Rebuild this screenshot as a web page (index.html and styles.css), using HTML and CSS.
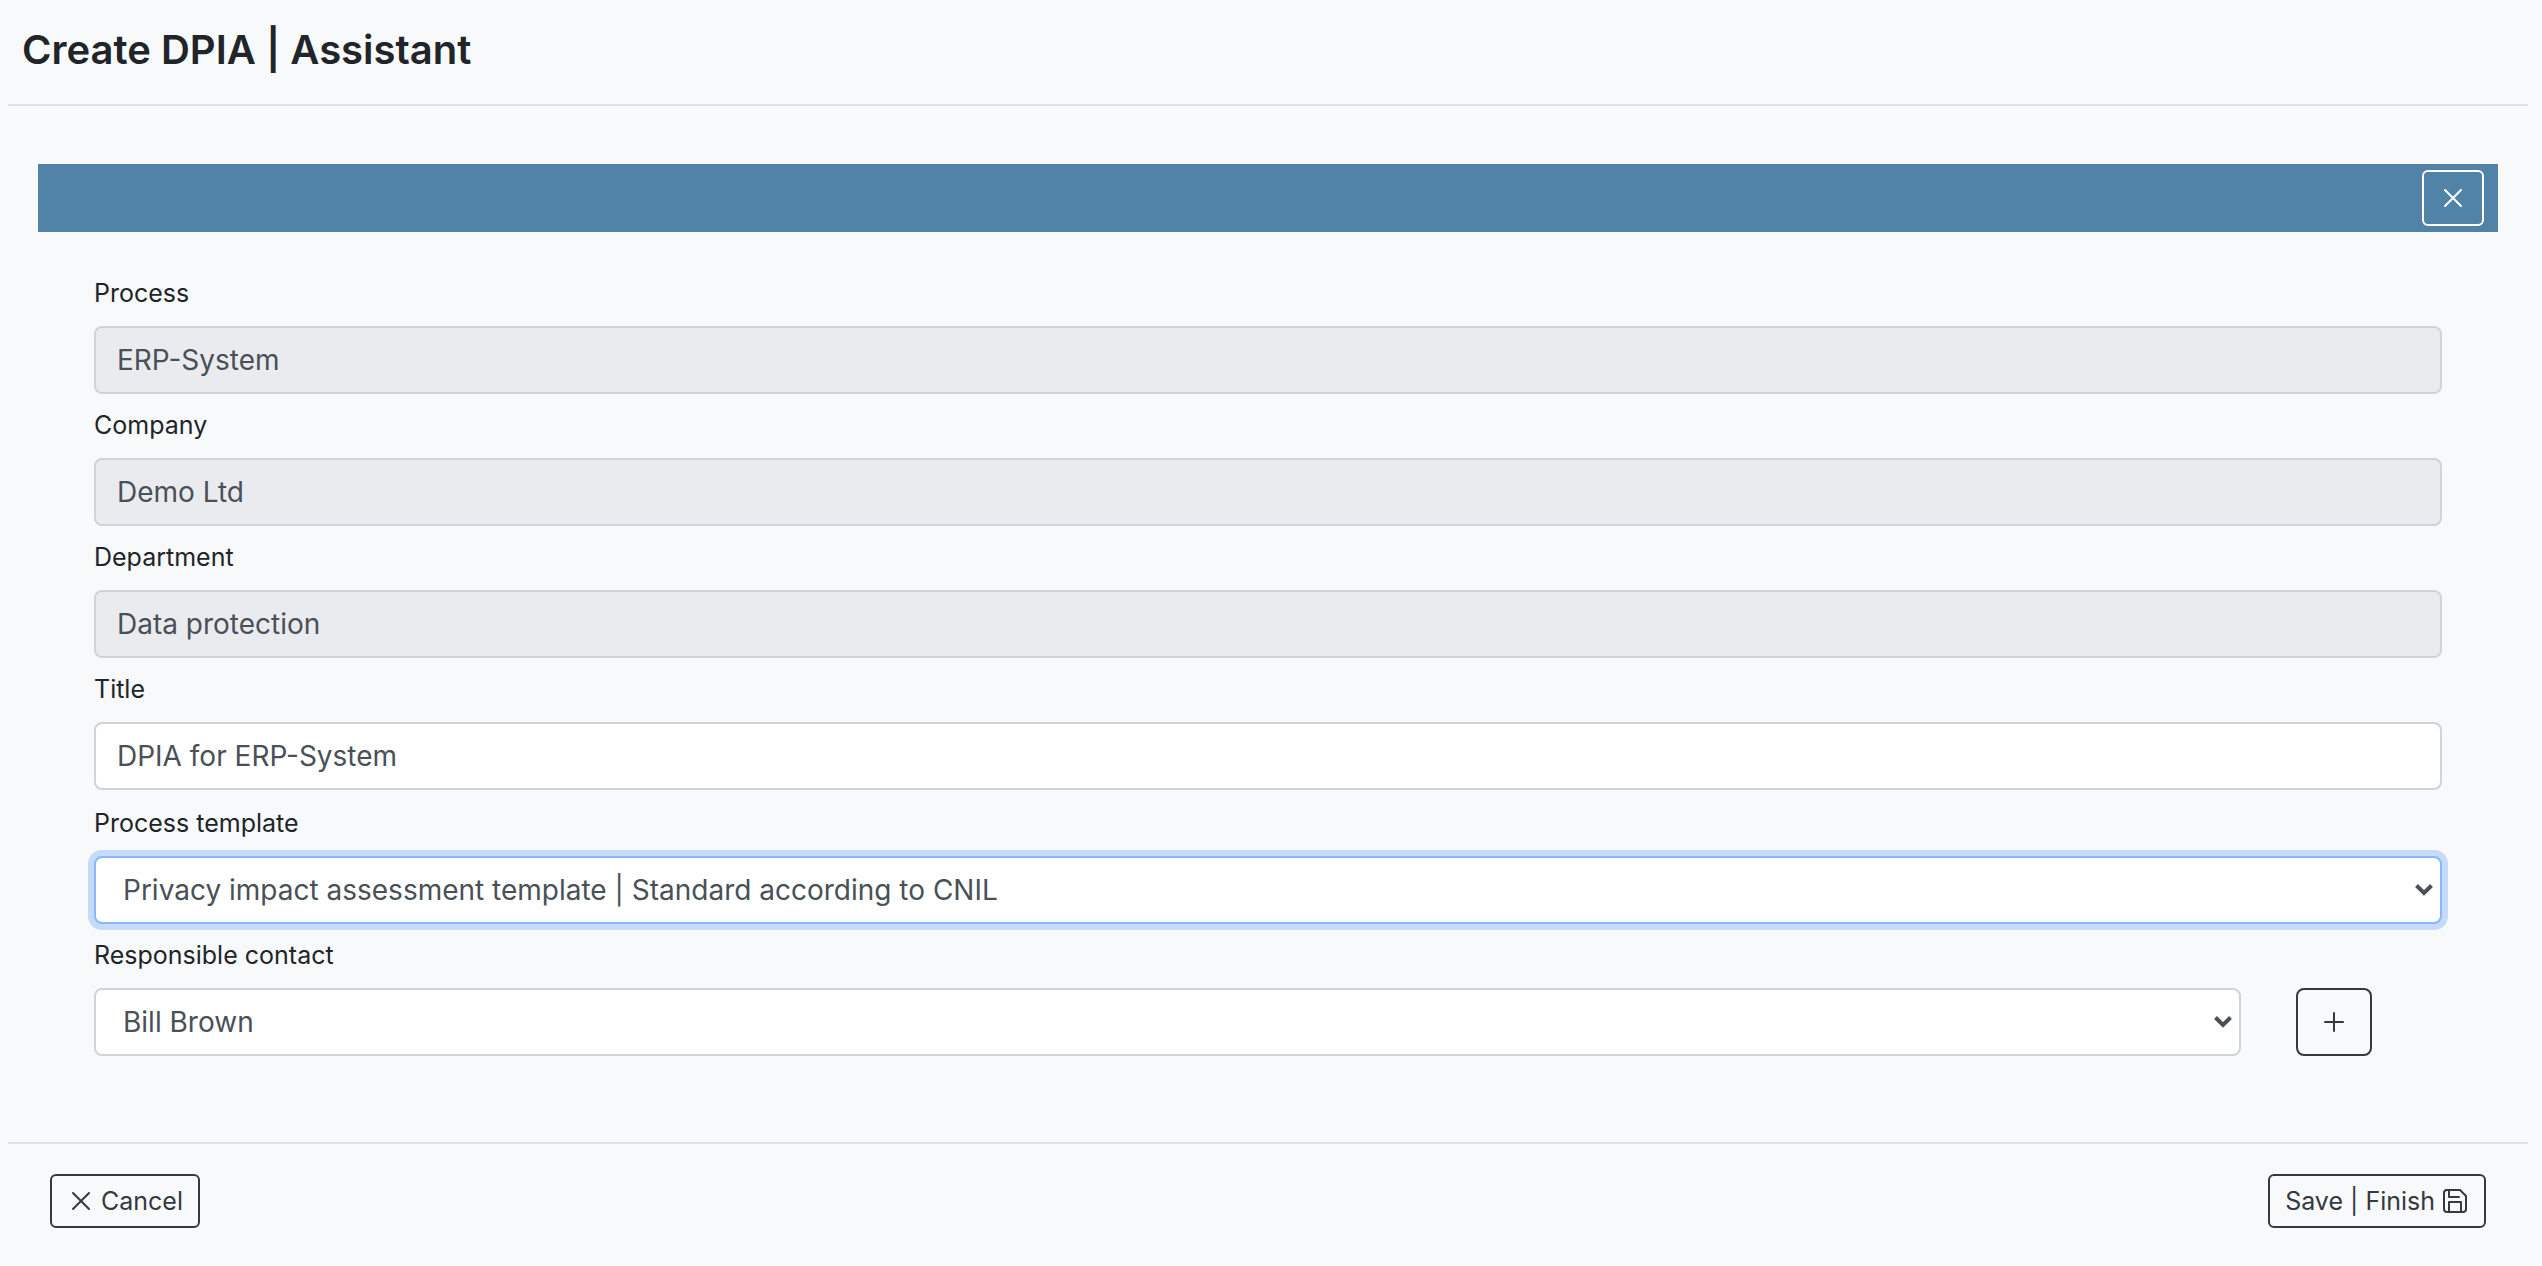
FILE: index.html
```html
<!DOCTYPE html>
<html lang="en">
<head>
    <meta charset="UTF-8">
    <meta name="viewport" content="width=device-width, initial-scale=1.0">
    <title>Create DPIA | Assistant</title>
    <link rel="stylesheet" href="styles.css">
</head>
<body>

    <form class="assistant">
        <header class="assistant-header">
            <h1>Create DPIA | Assistant</h1>
        </header>

        <main class="assistant-body">
            <div class="toolbar">
                <button type="button" class="btn btn-close" aria-label="Close">
                    <svg class="icon" viewBox="0 0 28 28"><path d="M6 6l16 16M22 6L6 22"/></svg>
                </button>
            </div>

            <div class="fields">
                <div class="field-group">
                    <label for="process">Process</label>
                    <input type="text" id="process" class="form-control" value="ERP-System" disabled>

                    <label for="company">Company</label>
                    <input type="text" id="company" class="form-control" value="Demo Ltd" disabled>

                    <label for="department">Department</label>
                    <input type="text" id="department" class="form-control" value="Data protection" disabled>

                    <label for="title">Title</label>
                    <input type="text" id="title" class="form-control" value="DPIA for ERP-System">
                </div>

                <div class="field-group">
                    <label for="template">Process template</label>
                    <select id="template" class="form-control" autofocus>
                        <option>Privacy impact assessment template | Standard according to CNIL</option>
                    </select>

                    <label for="contact">Responsible contact</label>
                    <div class="row">
                        <div class="col">
                            <select id="contact" class="form-control">
                                <option>Bill Brown</option>
                            </select>
                        </div>
                        <div class="col-add">
                            <button type="button" class="btn btn-add" aria-label="Add contact">
                                <svg class="icon" viewBox="0 0 28 28"><path d="M14 5v18M5 14h18"/></svg>
                            </button>
                        </div>
                    </div>
                </div>
            </div>
        </main>

        <footer class="assistant-footer">
            <button type="button" class="btn">
                <svg class="icon" viewBox="0 0 28 28"><path d="M6 6l16 16M22 6L6 22"/></svg>
                Cancel
            </button>
            <button type="submit" class="btn">
                Save | Finish
                <svg class="icon icon-save" viewBox="0 0 28 28">
                    <path d="M5 3h14l6 6v13a3 3 0 0 1-3 3H6a3 3 0 0 1-3-3V6a3 3 0 0 1 3-3z"/>
                    <path d="M8 3v7h10M8 25V15h12v10"/>
                </svg>
            </button>
        </footer>
    </form>

</body>
</html>
```
FILE: styles.css
```css
* { box-sizing: border-box; }

body {
    margin: 0;
    background-color: #f8f9fb;
    color: #212529;
    font-family: Inter, "Liberation Sans", sans-serif;
    font-size: 25px;
}

.assistant { margin: 0 14px 0 8px; }

.assistant-header {
    padding: 24px 14px 28px;
    border-bottom: 2px solid #dfe2e7;
}

h1 {
    margin: 0;
    font-size: 40px;
    font-weight: 600;
    line-height: 52px;
}

.assistant-body { padding: 58px 30px 86px; }

.toolbar {
    display: flex;
    justify-content: flex-end;
    padding: 6px 14px;
    background-color: #5182a7;
}

.fields {
    display: grid;
    gap: 2px;
    padding: 30px 56px 0;
}

label {
    display: block;
    margin-bottom: 2px;
    line-height: 62px;
}

.form-control {
    display: block;
    width: 100%;
    height: 68px;
    padding: 0 21px;
    border: 2px solid #ced4da;
    border-radius: 8px;
    background-color: #fff;
    color: #495057;
    font-family: inherit;
    font-size: 28px;
    outline: none;
}

.form-control:disabled { background-color: #eaebef; }

.form-control:focus {
    border-color: #86b8fc;
    box-shadow: 0 0 0 6px #c6dafa;
}

select.form-control {
    appearance: none;
    padding: 0 48px 0 27px;
    background-image: url("data:image/svg+xml,%3Csvg xmlns='http://www.w3.org/2000/svg' width='18' height='12' viewBox='0 0 18 12'%3E%3Cpath d='M1.5 1.5L9 9l7.5-7.5' fill='none' stroke='%23495057' stroke-width='4'/%3E%3C/svg%3E");
    background-repeat: no-repeat;
    background-position: right 7px center;
}

/* the row reaches past the fields so its columns keep their gutters */
.row {
    display: grid;
    grid-template-columns: 11fr 1fr;
    margin: 0 -30px;
}

.col { padding: 0 30px; }
.col-add { padding: 0 25px; }

.btn {
    display: flex;
    align-items: center;
    gap: 6px;
    height: 54px;
    padding: 0 15px;
    border: 2px solid #343a40;
    border-radius: 6px;
    background-color: transparent;
    color: #343a40;
    font-family: inherit;
    font-size: 25px;
    cursor: pointer;
}

.btn-close {
    height: 56px;
    border-color: #fff;
    color: #fff;
}

.btn-add {
    height: 68px;
    padding: 0 22px;
    border-radius: 8px;
}

.icon {
    width: 28px;
    height: 28px;
    fill: none;
    stroke: currentColor;
    stroke-width: 2;
    stroke-linecap: round;
}

.icon-save { stroke-linejoin: round; }

.assistant-footer {
    display: flex;
    justify-content: space-between;
    padding: 30px 42px;
    border-top: 2px solid #dfe2e7;
}
```
